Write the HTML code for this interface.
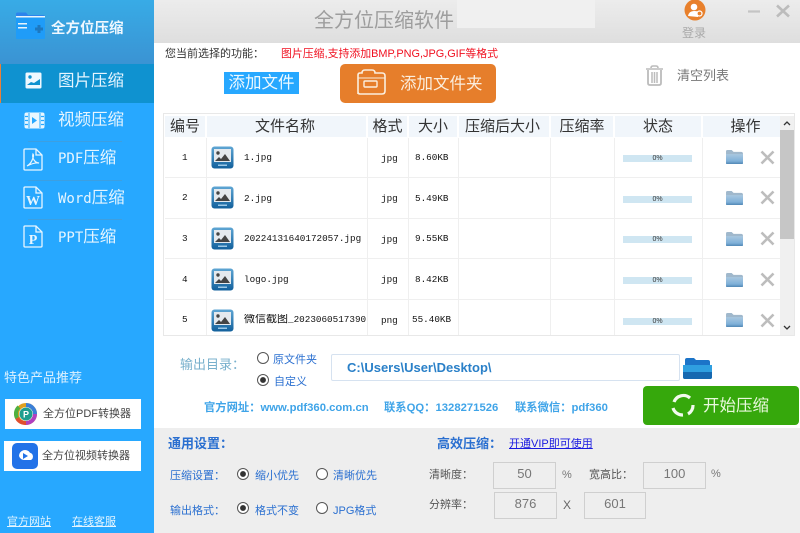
<!DOCTYPE html>
<html lang="zh">
<head>
<meta charset="utf-8">
<title>全方位压缩软件</title>
<style>
html,body{margin:0;padding:0;background:#fff}
body{position:relative;width:800px;height:533px;overflow:hidden;font-family:"Liberation Sans","Noto Sans CJK SC",sans-serif;color:#333;filter:blur(.3px)}
div,a,svg{position:absolute;white-space:nowrap;display:block}
#side{left:0;top:0;width:154px;height:533px;background:#27a8ff}
#sidehead{left:0;top:0;width:154px;height:64px;background:linear-gradient(180deg,#38abe6,#3a93d3)}
#sel{left:0;top:64px;width:154px;height:39px;background:#0f92d0}
#selbar{left:0;top:64px;width:1px;height:39px;background:#e8803a}
.nav{left:58px;font-size:16.5px;line-height:20px;color:#e6f5ff;font-family:"Noto Sans CJK SC",sans-serif}
.nav span{font-family:"DejaVu Sans Mono",monospace;font-size:14px}
.sep{left:28px;width:94px;height:1px;background:#3d9fe0}
.promo{background:#fff;height:30px;color:#444;font-size:11px;line-height:30px}
.tb{left:154px;top:0;width:646px;height:43px;background:linear-gradient(180deg,#ececec,#dedede)}
.th{top:116px;height:21px;background:#f1f6fb;text-align:center;font-size:15px;line-height:22px;color:#333}
.vl{top:138px;width:1px;height:197px;background:#efefef}
.hl{left:165px;width:615px;height:1px;background:#efefef}
.c{font-family:"Liberation Mono","Noto Sans CJK SC",monospace;font-size:9.3px;line-height:12px;color:#111}
.c span{font-size:11px}
.bar{left:623px;width:69px;height:7px;background:#cfe6f2;font-size:7px;line-height:8px;text-align:center;color:#333}
.b{color:#2a6fd0;font-size:11px;line-height:14px}
.l{color:#555;font-size:11px;line-height:14px}
.inp{background:#eeeeee;border:1px solid #cfcfcf;box-sizing:border-box;height:27px;text-align:center;font-size:13px;line-height:22px;color:#777}
.r{width:10px;height:10px;border:1px solid #555;border-radius:50%;background:#fff;box-sizing:border-box}
.r.on{background:radial-gradient(circle,#333 0,#333 2.6px,#fff 3.2px)}
.web{top:401px;font-size:11.3px;line-height:14px;font-weight:bold;color:#3fa4e8}
</style>
</head>
<body>
<svg width="0" height="0" style="left:0;top:0">
<defs>
<linearGradient id="fg" x1="0" y1="0" x2="0" y2="1"><stop offset="0" stop-color="#a9c8e0"/><stop offset="0.7" stop-color="#7fb0d8"/><stop offset="1" stop-color="#4f86b4"/></linearGradient>
<linearGradient id="tg" x1="0" y1="0" x2="0" y2="1"><stop offset="0" stop-color="#5fa6d4"/><stop offset="1" stop-color="#12609c"/></linearGradient>
<symbol id="thumb" viewBox="0 0 23 23">
<rect x="0.5" y="0.5" width="22" height="22" rx="3" fill="url(#tg)"/>
<rect x="3" y="3" width="17" height="13" fill="#e4e9ee"/>
<circle cx="7" cy="7" r="1.7" fill="#444"/>
<path d="M4 15l4-4 2 2 4-5 5 7z" fill="#444"/>
<rect x="7" y="18.5" width="9" height="1.5" fill="#9cc8e6"/>
</symbol>
<symbol id="fold" viewBox="0 0 20 17">
<path d="M1 15V2.5Q1 1 2.500 1H7l2 2h8q2 0 2 2v10q0 1-1 1H2q-1 0-1-1z" fill="#a0b8cc"/>
<path d="M1 15V5.500h18V15q0 1-1 1H2q-1 0-1-1z" fill="url(#fg)"/>
</symbol>
<symbol id="x" viewBox="0 0 15 15">
<path d="M1.500 1.500l12 12M13.500 1.500l-12 12" stroke="#bdbdbd" stroke-width="2.600" fill="none"/>
</symbol>
</defs>
</svg>

<div id="side"></div>
<div id="sidehead"></div>
<div id="sel"></div>
<div id="selbar"></div>

<svg style="left:15px;top:12px" width="31" height="27" viewBox="0 0 31 27">
<path d="M1 26V2q0-1.500 1.500-1.500H11l2 2.500h15q2 0 2 2v21z" fill="#2c84ec"/>
<path d="M1 5h29v21q0 1-1 1H2q-1 0-1-1z" fill="#1f9cf8"/>
<rect x="1" y="4" width="29" height="1.500" fill="#e8f4fc"/>
<rect x="3" y="11" width="9" height="1.500" fill="#e8f4fc"/>
<rect x="3" y="15" width="9" height="1.500" fill="#e8f4fc"/>
<path d="M20 17h8M24 13v8" stroke="#1d78c0" stroke-width="3"/>
</svg>
<div style="left:51px;top:19px;font-size:14.500px;line-height:20px;color:#f0f8ff;font-weight:bold">全方位压缩</div>

<svg style="left:25px;top:72px" width="17" height="17" viewBox="0 0 17 17"><rect x="0.500" y="0.500" width="16" height="16" rx="1.500" fill="#eef8ff"/><path d="M2 13l4-3 3 1 6-4v6z" fill="#0f92d0"/><circle cx="5" cy="5" r="1.700" fill="#0f92d0"/></svg>
<svg style="left:24px;top:112px" width="21" height="17" viewBox="0 0 21 17"><rect x="0.500" y="0.500" width="20" height="16" rx="2" fill="#eaf7ff"/><path d="M8 5l5 3.500-5 3.500z" fill="#27a8ff"/><path d="M5 1v15M16 1v15" stroke="#27a8ff"/><path d="M1 4.500h3M1 8.500h3M1 12.500h3M17 4.500h3M17 8.500h3M17 12.500h3" stroke="#27a8ff" stroke-width="1.200"/></svg>
<svg style="left:23px;top:148px" width="20" height="23" viewBox="0 0 20 23"><path d="M1 2q0-1 1-1h11l6 6v14q0 1-1 1H2q-1 0-1-1z" fill="none" stroke="#e8f6ff" stroke-width="1.300"/><path d="M13 1v6h6" fill="none" stroke="#e8f6ff" stroke-width="1.300"/><path d="M4 18q4-2 6-8 1-3 0-4-1 3 1 6 2 3 5 3-4-1-12 3z" fill="none" stroke="#e8f6ff" stroke-width="1.200"/></svg>
<svg style="left:23px;top:186px" width="20" height="23" viewBox="0 0 20 23"><path d="M1 2q0-1 1-1h11l6 6v14q0 1-1 1H2q-1 0-1-1z" fill="none" stroke="#e8f6ff" stroke-width="1.300"/><path d="M13 1v6h6" fill="none" stroke="#e8f6ff" stroke-width="1.300"/><text x="10" y="19" text-anchor="middle" font-family="Liberation Serif" font-weight="bold" font-size="14" fill="#e8f6ff">W</text></svg>
<svg style="left:23px;top:225px" width="20" height="23" viewBox="0 0 20 23"><path d="M1 2q0-1 1-1h11l6 6v14q0 1-1 1H2q-1 0-1-1z" fill="none" stroke="#e8f6ff" stroke-width="1.300"/><path d="M13 1v6h6" fill="none" stroke="#e8f6ff" stroke-width="1.300"/><text x="10" y="19" text-anchor="middle" font-family="Liberation Serif" font-weight="bold" font-size="14" fill="#e8f6ff">P</text></svg>

<div class="nav" style="top:69px">图片压缩</div>
<div class="nav" style="top:108px">视频压缩</div>
<div class="sep" style="top:141px"></div>
<div class="nav" style="top:146px"><span>PDF</span>压缩</div>
<div class="sep" style="top:180px"></div>
<div class="nav" style="top:186px"><span>Word</span>压缩</div>
<div class="sep" style="top:219px"></div>
<div class="nav" style="top:225px"><span>PPT</span>压缩</div>

<div style="left:4px;top:370px;font-size:13px;line-height:16px;color:#dff2ff">特色产品推荐</div>
<div class="promo" style="left:5px;top:399px;width:136px;text-indent:38px">全方位PDF转换器</div>
<svg style="left:14px;top:402px" width="24" height="24" viewBox="0 0 24 24"><circle cx="12" cy="12" r="9" fill="none" stroke="#e0a020" stroke-width="4"/><path d="M12 3a9 9 0 0 1 9 9" fill="none" stroke="#3a7fd8" stroke-width="4"/><path d="M21 12a9 9 0 0 1-9 9" fill="none" stroke="#b040c0" stroke-width="4"/><path d="M12 21a9 9 0 0 1-9-5" fill="none" stroke="#e05030" stroke-width="4"/><path d="M3 16a9 9 0 0 1 2-11" fill="none" stroke="#50b040" stroke-width="4"/><circle cx="12" cy="12" r="6.500" fill="#1f9e8e"/><text x="12" y="15.500" text-anchor="middle" font-family="Liberation Sans" font-weight="bold" font-size="9" fill="#fff">P</text></svg>
<div class="promo" style="left:4px;top:441px;width:137px;text-indent:38px">全方位视频转换器</div>
<svg style="left:12px;top:443px" width="26" height="26" viewBox="0 0 26 26"><rect width="26" height="26" rx="5" fill="#2272e8"/><path d="M7 13a6 6 0 0 1 11-3.300 4 4 0 0 1 1 7.300h-7a6 6 0 0 1-5-4z" fill="#fff"/><path d="M11 10l5 3-5 3z" fill="#2272e8"/></svg>
<div style="left:7px;top:515px;font-size:11px;line-height:14px;color:#e4f5ff;text-decoration:underline">官方网站</div>
<div style="left:72px;top:515px;font-size:11px;line-height:14px;color:#e4f5ff;text-decoration:underline">在线客服</div>

<div class="tb"></div>
<div style="left:457px;top:0;width:138px;height:28px;background:#f0f0f0"></div>
<div style="left:314px;top:8px;font-size:20px;line-height:27px;color:#9d9d9d">全方位压缩软件</div>
<svg style="left:684px;top:0" width="22" height="21" viewBox="0 0 22 21"><circle cx="11" cy="10" r="10.500" fill="#e8802c"/><circle cx="10" cy="7" r="3.300" fill="#fff"/><path d="M4 16q1-5 6-5t5 2l-1 4z" fill="#fff"/><circle cx="15.500" cy="13.500" r="2.500" fill="#e8802c" stroke="#fff" stroke-width="1.200"/></svg>
<div style="left:682px;top:25px;font-size:12px;line-height:16px;color:#a9a9a9">登录</div>
<svg style="left:747px;top:4px" width="46" height="14" viewBox="0 0 46 14"><path d="M1 7.500h12" stroke="#c4c4c4" stroke-width="2.200"/><path d="M30 1.500l12 11M42 1.500l-12 11" stroke="#bcbcbc" stroke-width="2.600"/></svg>

<div style="left:165px;top:47px;font-size:11px;line-height:14px;color:#333">您当前选择的功能：</div>
<div style="left:281px;top:47px;font-size:10.900px;line-height:14px;color:#f01020">图片压缩,支持添加BMP,PNG,JPG,GIF等格式</div>

<div style="left:224px;top:72px;width:75px;height:22px;background:#27a8ff;color:#eef9ff;font-size:16.500px;line-height:23px;text-align:center">添加文件</div>
<div style="left:340px;top:64px;width:156px;height:39px;background:#e67e2b;border-radius:5px;color:#fbeede;font-size:16.500px;line-height:40px;text-indent:60px">添加文件夹</div>
<svg style="left:356px;top:69px" width="31" height="27" viewBox="0 0 31 27"><path d="M2 25V6q0-2 2-2h2q0-3 3-3h7q3 0 3 3h7q3 0 3 3v15q0 3-3 3H4q-2 0-2-2z" fill="none" stroke="#fbeede" stroke-width="1.600"/><path d="M2 9h27" stroke="#fbeede" stroke-width="1" /><rect x="8" y="12" width="13" height="6" rx="1" fill="none" stroke="#fbeede" stroke-width="1.400"/></svg>
<svg style="left:645px;top:65px" width="19" height="21" viewBox="0 0 19 21"><path d="M1 4h17M6 3q0-2 2-2h3q2 0 2 2" fill="none" stroke="#bcbcbc" stroke-width="1.600"/><path d="M3 5v13q0 2 2 2h9q2 0 2-2V5" fill="none" stroke="#bcbcbc" stroke-width="1.800"/><path d="M7 7v11M9.500 7v11M12 7v11" stroke="#bcbcbc" stroke-width="1.500"/></svg>
<div style="left:677px;top:68px;font-size:13px;line-height:16px;color:#777">清空列表</div>

<div style="left:163px;top:113px;width:632px;height:223px;border:1px solid #e8e8e8;box-sizing:border-box"></div>
<div class="th" style="left:165px;width:40px">编号</div>
<div class="th" style="left:207px;width:159px;text-indent:-3px">文件名称</div>
<div class="th" style="left:368px;width:39px">格式</div>
<div class="th" style="left:409px;width:48px">大小</div>
<div class="th" style="left:459px;width:90px;text-indent:-3px">压缩后大小</div>
<div class="th" style="left:551px;width:62px">压缩率</div>
<div class="th" style="left:615px;width:86px">状态</div>
<div class="th" style="left:703px;width:77px;text-indent:8px">操作</div>

<div class="vl" style="left:206px"></div>
<div class="vl" style="left:367px"></div>
<div class="vl" style="left:408px"></div>
<div class="vl" style="left:458px"></div>
<div class="vl" style="left:550px"></div>
<div class="vl" style="left:614px"></div>
<div class="vl" style="left:702px"></div>
<div class="hl" style="top:177px"></div>
<div class="hl" style="top:218px"></div>
<div class="hl" style="top:258px"></div>
<div class="hl" style="top:299px"></div>

<div class="c" style="left:182px;top:152px">1</div>
<div class="c" style="left:182px;top:192px">2</div>
<div class="c" style="left:182px;top:233px">3</div>
<div class="c" style="left:182px;top:274px">4</div>
<div class="c" style="left:182px;top:314px">5</div>

<svg style="left:211px;top:146px" width="23" height="23"><use href="#thumb"/></svg>
<svg style="left:211px;top:186px" width="23" height="23"><use href="#thumb"/></svg>
<svg style="left:211px;top:227px" width="23" height="23"><use href="#thumb"/></svg>
<svg style="left:211px;top:268px" width="23" height="23"><use href="#thumb"/></svg>
<svg style="left:211px;top:309px" width="23" height="23"><use href="#thumb"/></svg>

<div class="c" style="left:244px;top:152px">1.jpg</div>
<div class="c" style="left:244px;top:193px">2.jpg</div>
<div class="c" style="left:244px;top:233px">20224131640172057.jpg</div>
<div class="c" style="left:244px;top:274px">logo.jpg</div>
<div class="c" style="left:244px;top:314px;width:123px;overflow:hidden"><span>微信截图</span>_2023060517390</div>

<div class="c" style="left:381px;top:153px">jpg</div>
<div class="c" style="left:381px;top:193px">jpg</div>
<div class="c" style="left:381px;top:234px">jpg</div>
<div class="c" style="left:381px;top:274px">jpg</div>
<div class="c" style="left:381px;top:315px">png</div>

<div class="c" style="left:415px;top:152px">8.60KB</div>
<div class="c" style="left:415px;top:193px">5.49KB</div>
<div class="c" style="left:415px;top:233px">9.55KB</div>
<div class="c" style="left:415px;top:274px">8.42KB</div>
<div class="c" style="left:412px;top:314px">55.40KB</div>

<div class="bar" style="top:155px">0%</div>
<div class="bar" style="top:196px">0%</div>
<div class="bar" style="top:236px">0%</div>
<div class="bar" style="top:277px">0%</div>
<div class="bar" style="top:318px">0%</div>

<svg style="left:725px;top:149px" width="19" height="16"><use href="#fold"/></svg>
<svg style="left:725px;top:190px" width="19" height="16"><use href="#fold"/></svg>
<svg style="left:725px;top:231px" width="19" height="16"><use href="#fold"/></svg>
<svg style="left:725px;top:272px" width="19" height="16"><use href="#fold"/></svg>
<svg style="left:725px;top:312px" width="19" height="16"><use href="#fold"/></svg>

<svg style="left:760px;top:150px" width="15" height="15"><use href="#x"/></svg>
<svg style="left:760px;top:190px" width="15" height="15"><use href="#x"/></svg>
<svg style="left:760px;top:231px" width="15" height="15"><use href="#x"/></svg>
<svg style="left:760px;top:272px" width="15" height="15"><use href="#x"/></svg>
<svg style="left:760px;top:313px" width="15" height="15"><use href="#x"/></svg>

<div style="left:780px;top:116px;width:14px;height:219px;background:#f0f0f0"></div>
<div style="left:780px;top:130px;width:14px;height:109px;background:#c6c6c6"></div>
<svg style="left:780px;top:116px" width="14" height="219" viewBox="0 0 14 219"><path d="M4 9l3-3 3 3M4 210l3 3 3-3" fill="none" stroke="#333" stroke-width="1.300"/></svg>

<div style="left:180px;top:357px;font-size:13px;line-height:16px;color:#78b0cc">输出目录：</div>
<div class="r" style="left:257px;top:352px;width:12px;height:12px"></div>
<div class="b" style="left:273px;top:353px">原文件夹</div>
<div class="r on" style="left:257px;top:374px;width:12px;height:12px"></div>
<div class="b" style="left:274px;top:375px">自定义</div>
<div style="left:331px;top:354px;width:349px;height:27px;border:1px solid #d6e2f0;box-sizing:border-box;border-radius:2px;background:#fff;padding-left:15px;font-size:13px;line-height:26px;font-weight:bold;color:#2a80c8">C:\Users\User\Desktop\</div>
<svg style="left:683px;top:357px" width="29" height="23" viewBox="0 0 29 23"><path d="M2 16V3q0-2 2-2h7l2 2h12q2 0 2 2v11z" fill="#1c74c8"/><path d="M0 8h29v12q0 2-2 2H2q-2 0-2-2z" fill="#2f9fe0"/><path d="M0 15h29v5q0 2-2 2H2q-2 0-2-2z" fill="#1668b0"/></svg>

<div class="web" style="left:204px">官方网址：www.pdf360.com.cn</div>
<div class="web" style="left:384px">联系QQ：1328271526</div>
<div class="web" style="left:515px">联系微信：pdf360</div>

<div style="left:643px;top:386px;width:156px;height:39px;background:#36a80c;border-radius:4px;color:#e8f8dc;font-size:16.500px;line-height:40px;text-indent:60px">开始压缩</div>
<svg style="left:671px;top:393px" width="24" height="24" viewBox="0 0 24 24"><path d="M19 5A10 10 0 0 0 3 9M2 15a10 10 0 0 0 10 7M17 21a10 10 0 0 0 5-9" fill="none" stroke="#f2faee" stroke-width="3.200"/></svg>

<div style="left:154px;top:428px;width:646px;height:105px;background:#eeeeee"></div>
<div style="left:168px;top:436px;font-size:13px;line-height:16px;font-weight:bold;color:#2a6fd0">通用设置：</div>
<div style="left:437px;top:436px;font-size:13px;line-height:16px;font-weight:bold;color:#2a6fd0">高效压缩：</div>
<div style="left:509px;top:437px;font-size:11px;line-height:15px;color:#1a1ae0;text-decoration:underline">开通VIP即可使用</div>

<div class="b" style="left:170px;top:469px">压缩设置：</div>
<div class="r on" style="left:237px;top:468px;width:12px;height:12px"></div>
<div class="b" style="left:255px;top:469px">缩小优先</div>
<div class="r" style="left:316px;top:468px;width:12px;height:12px"></div>
<div class="b" style="left:333px;top:469px">清晰优先</div>

<div class="b" style="left:170px;top:504px">输出格式：</div>
<div class="r on" style="left:237px;top:502px;width:12px;height:12px"></div>
<div class="b" style="left:255px;top:504px">格式不变</div>
<div class="r" style="left:316px;top:502px;width:12px;height:12px"></div>
<div class="b" style="left:333px;top:504px">JPG格式</div>

<div class="l" style="left:429px;top:468px">清晰度：</div>
<div class="inp" style="left:493px;top:462px;width:63px">50</div>
<div class="l" style="left:562px;top:468px;color:#777">%</div>
<div class="l" style="left:589px;top:468px">宽高比：</div>
<div class="inp" style="left:643px;top:462px;width:63px">100</div>
<div class="l" style="left:711px;top:467px;color:#777">%</div>
<div class="l" style="left:429px;top:498px">分辨率：</div>
<div class="inp" style="left:494px;top:492px;width:63px">876</div>
<div class="l" style="left:563px;top:498px;font-size:12px;color:#666">X</div>
<div class="inp" style="left:584px;top:492px;width:62px">601</div>
</body>
</html>
